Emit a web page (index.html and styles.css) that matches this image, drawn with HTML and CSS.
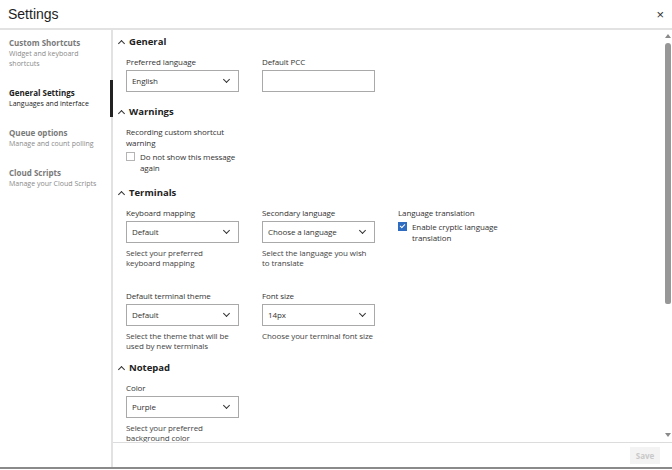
FILE: index.html
```html
<!DOCTYPE html>
<html>
<head>
    <meta charset="utf-8">
    <title>Settings</title>
    <link rel="stylesheet" href="styles.css">
</head>
<body>
<div class="dialog">
    <div class="dialog-header">
        <span class="dialog-title">Settings</span>
        <span class="dialog-close">&times;</span>
    </div>
    <div class="dialog-body">
        <ul class="nav">
            <li class="nav-item">
                <div class="nav-title">Custom Shortcuts</div>
                <div class="nav-sub">Widget and keyboard shortcuts</div>
            </li>
            <li class="nav-item active">
                <div class="nav-title">General Settings</div>
                <div class="nav-sub">Languages and interface</div>
            </li>
            <li class="nav-item">
                <div class="nav-title">Queue options</div>
                <div class="nav-sub">Manage and count polling</div>
            </li>
            <li class="nav-item">
                <div class="nav-title">Cloud Scripts</div>
                <div class="nav-sub">Manage your Cloud Scripts</div>
            </li>
        </ul>
        <div class="panel">
            <div class="panel-main">
                <div class="panel-scroll">
                    <!-- General -->
                    <section class="section">
                        <h3 class="section-title"><span class="caret"></span>General</h3>
                        <div class="row">
                            <div class="field">
                                <label>Preferred language</label>
                                <div class="select">English</div>
                            </div>
                            <div class="field">
                                <label>Default PCC</label>
                                <input class="text-input" type="text">
                            </div>
                        </div>
                    </section>

                    <!-- Warnings -->
                    <section class="section">
                        <h3 class="section-title"><span class="caret"></span>Warnings</h3>
                        <div class="row">
                            <div class="field">
                                <label>Recording custom shortcut warning</label>
                                <div class="check">
                                    <span class="box"></span>
                                    <span>Do not show this message again</span>
                                </div>
                            </div>
                        </div>
                    </section>

                    <!-- Terminals -->
                    <section class="section">
                        <h3 class="section-title"><span class="caret"></span>Terminals</h3>
                        <div class="row">
                            <div class="field">
                                <label>Keyboard mapping</label>
                                <div class="select">Default</div>
                                <div class="help">Select your preferred keyboard mapping</div>
                            </div>
                            <div class="field">
                                <label>Secondary language</label>
                                <div class="select">Choose a language</div>
                                <div class="help">Select the language you wish to translate</div>
                            </div>
                            <div class="field">
                                <label>Language translation</label>
                                <div class="check">
                                    <span class="box checked"></span>
                                    <span>Enable cryptic language translation</span>
                                </div>
                            </div>
                        </div>
                        <div class="row">
                            <div class="field">
                                <label>Default terminal theme</label>
                                <div class="select">Default</div>
                                <div class="help">Select the theme that will be used by new terminals</div>
                            </div>
                            <div class="field">
                                <label>Font size</label>
                                <div class="select">14px</div>
                                <div class="help">Choose your terminal font size</div>
                            </div>
                        </div>
                    </section>

                    <!-- Notepad -->
                    <section class="section">
                        <h3 class="section-title"><span class="caret"></span>Notepad</h3>
                        <div class="row">
                            <div class="field">
                                <label>Color</label>
                                <div class="select">Purple</div>
                                <div class="help">Select your preferred background color</div>
                            </div>
                        </div>
                    </section>
                </div>
                <div class="scrollbar">
                    <span class="sb-btn up"></span>
                    <div class="sb-track"><div class="sb-thumb"></div></div>
                    <span class="sb-btn down"></span>
                </div>
            </div>
            <div class="panel-footer">
                <button class="btn-save" disabled>Save</button>
            </div>
        </div>
    </div>
</div>
</body>
</html>
```

FILE: styles.css
```css
*
{
    box-sizing: border-box;
}
body
{
    margin: 0;
    padding: 0;
    background: #fff;
    font-family: "Open Sans", sans-serif;
    font-size: 8px;
    letter-spacing: -0.1px;
    color: #333;
}
.dialog
{
    height: 469px;
    display: flex;
    flex-direction: column;
    border-bottom: 2px solid #8a8a8a;
}
.dialog-header
{
    height: 30px;
    flex: none;
    display: flex;
    align-items: center;
    justify-content: space-between;
    padding: 0 8px 0 8px;
    border-bottom: 2px solid #e2e2e2;
}
.dialog-title
{
    font-family: "Liberation Sans", Arial, sans-serif;
    font-size: 14px;
    letter-spacing: 0;
    color: #1e1e1e;
}
.dialog-close
{
    font-family: "Liberation Sans", Arial, sans-serif;
    font-size: 13px;
    color: #333;
}
.dialog-body
{
    flex: 1;
    display: flex;
    min-height: 0;
}

/* left navigation */
.nav
{
    list-style: none;
    margin: 0;
    padding: 0;
    width: 113px;
    flex: none;
    border-right: 2px solid #e2e2e2;
}
.nav-item
{
    position: relative;
    padding: 7px 14px 11px 9px;
}
.nav-item.active::after
{
    content: "";
    position: absolute;
    right: -2px;
    top: 0;
    bottom: 3px;
    width: 3px;
    background: #222;
}
.nav-title
{
    font-weight: bold;
    line-height: 12px;
    letter-spacing: 0;
    color: #7a7a7a;
}
.nav-sub
{
    font-size: 7px;
    line-height: 10px;
    letter-spacing: 0;
    color: #8a8a8a;
}
.nav-item.active .nav-title,
.nav-item.active .nav-sub
{
    color: #222;
}

/* right panel */
.panel
{
    flex: 1;
    display: flex;
    flex-direction: column;
    min-width: 0;
}
.panel-main
{
    flex: 1;
    display: flex;
    min-height: 0;
}
.panel-scroll
{
    flex: 1;
    overflow: hidden;
    padding: 5px 0 0 13px;
}

/* scrollbar */
.scrollbar
{
    width: 8px;
    flex: none;
    display: flex;
    flex-direction: column;
    align-items: center;
    padding-right: 1px;
}
.sb-btn
{
    flex: none;
    width: 0;
    height: 0;
    border-left: 3px solid transparent;
    border-right: 3px solid transparent;
}
.sb-btn.up
{
    margin: 4px 0 4px 0;
    border-bottom: 4px solid #8a8a8a;
}
.sb-btn.down
{
    margin: 4px 0 5px 0;
    border-top: 4px solid #8a8a8a;
}
.sb-track
{
    flex: 1;
    width: 100%;
    padding-left: 1px;
}
.sb-thumb
{
    width: 6px;
    height: 261px;
    margin-top: 1px;
    background: #979797;
    border-radius: 3px 3px 2px 2px;
}

.section
{
    padding-bottom: 10px;
}
.section-title
{
    margin: 0 0 7px -9px;
    font-size: 9.5px;
    line-height: 14px;
    letter-spacing: 0;
    font-weight: bold;
    color: #222;
    display: flex;
    align-items: center;
}
.caret
{
    width: 5px;
    height: 5px;
    border-left: 1.3px solid #333;
    border-top: 1.3px solid #333;
    transform: rotate(45deg);
    margin: 3px 5px 0 2px;
}
.row
{
    display: flex;
    gap: 23px;
}
.row + .row
{
    margin-top: 22px;
}
.field
{
    width: 113px;
}
.field label
{
    display: block;
    line-height: 11px;
    margin-bottom: 3px;
}
.field > :last-child:not(.help)
{
    margin-bottom: 3px;
}
.select,
.text-input
{
    display: block;
    width: 113px;
    height: 22px;
    border: 1px solid #a9a9a9;
    background: #fff;
    font: inherit;
    color: #333;
}
.select
{
    position: relative;
    line-height: 20px;
    padding-left: 5px;
}
.select::after
{
    content: "";
    position: absolute;
    right: 9px;
    top: 6px;
    width: 4px;
    height: 4px;
    border-right: 1.3px solid #333;
    border-bottom: 1.3px solid #333;
    transform: rotate(45deg);
}
.help
{
    margin-top: 5px;
    line-height: 10px;
    color: #444;
}
.check
{
    display: flex;
    align-items: flex-start;
    line-height: 11px;
    margin-top: 1px;
}
.box
{
    flex: none;
    width: 9px;
    height: 9px;
    margin: 1px 5px 0 0;
    border: 1px solid #b4b4b4;
    background: #fff;
    position: relative;
}
.box.checked
{
    background: #2d6cc0;
    border-color: #2d6cc0;
}
.box.checked::after
{
    content: "";
    position: absolute;
    left: 2px;
    top: 0px;
    width: 2px;
    height: 4px;
    border-right: 1.3px solid #fff;
    border-bottom: 1.3px solid #fff;
    transform: rotate(45deg);
}

.panel-footer
{
    height: 25px;
    flex: none;
    border-top: 1px solid #dcdcdc;
    display: flex;
    align-items: center;
    justify-content: flex-end;
    padding-right: 12px;
}
.btn-save
{
    font-family: inherit;
    font-size: 8px;
    font-weight: bold;
    color: #c9c9c9;
    background: #f3f3f3;
    border: none;
    width: 30px;
    height: 17px;
    padding: 0;
}
```
